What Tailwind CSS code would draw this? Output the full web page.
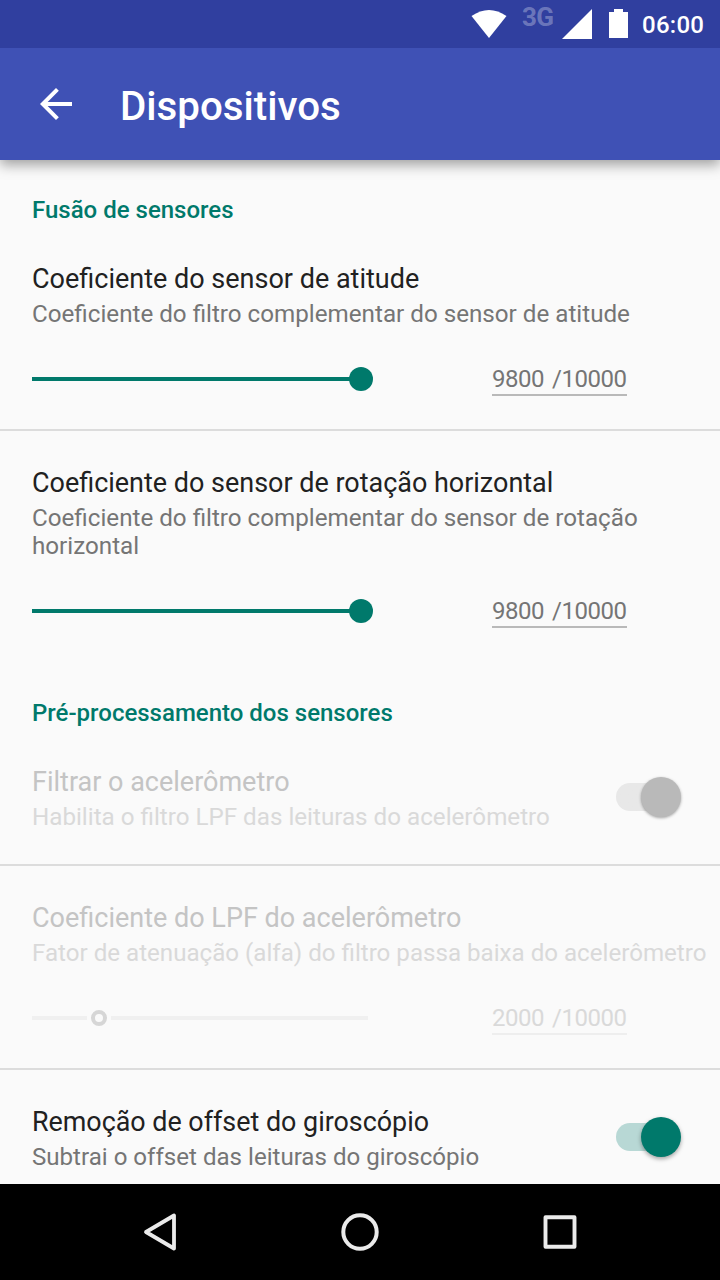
<!DOCTYPE html>
<html lang="pt"><head><meta charset="utf-8"><title>Dispositivos</title>
<script src="https://cdn.jsdelivr.net/npm/@tailwindcss/browser@4"></script></head>
<body class="w-[720px] h-[1280px] overflow-hidden bg-[#fafafa] font-['Roboto',sans-serif] flex flex-col">
<div class="h-12 shrink-0 bg-[#303f9f] relative z-20">
<svg class="w-[720px] h-12" viewBox="0 0 720 48" fill="#fff"><path d="M471.500 16Q489 4 506.500 16L489 38Z"/><text x="522" y="26" font-size="26" font-weight="700" fill-opacity=".3" textLength="32">3G</text><path d="M562 39L592 9V39Z"/><path d="M614 9h9v3h5v26h-19V12h5Z"/><text x="642" y="33" font-size="24" font-weight="500" textLength="62">06:00</text></svg>
</div>
<header class="h-28 shrink-0 bg-[#3f51b5] flex items-center pl-8 relative z-10 shadow-[0_5px_12px_rgba(0,0,0,0.36)]">
<svg class="w-12 h-12" viewBox="0 0 24 24" fill="#fff"><path d="M20 11H7.830l5.590-5.590L12 4l-8 8 8 8 1.410-1.410L7.830 13H20v-2z"/></svg>
<h1 class="ml-10 text-[40.300px] font-medium text-white leading-none pt-1.5">Dispositivos</h1></header>
<main class="h-[1024px] shrink-0 overflow-hidden text-[24.200px] leading-7 text-[#757575]">
<h2 class="pl-8 pt-9 h-[67px] text-[24px] font-medium text-[#00796b]">Fusão de sensores</h2>
<section class="pl-8 pt-[34px] pb-[30px] border-b-2 border-[#dcdcdc]">
<h3 class="text-[27px] leading-9 text-[#212121]">Coeficiente do sensor de atitude</h3>
<p class="mt-[3px]">Coeficiente do filtro complementar do sensor de atitude</p>
<div class="mt-[31px] h-10 flex items-start">
<svg class="w-[345px] h-10" viewBox="0 0 345 40" fill="#00796b"><path d="M0 18h329v4H0z"/><circle cx="329" cy="20" r="12"/></svg>
<div class="ml-[115px] mt-1.5 w-[135px] h-[31px] border-b-2 border-[#b9b9b9] whitespace-nowrap flex gap-2 text-[24px] tracking-[-0.480px]"><span>9800</span><span>/10000</span></div></div>
</section>
<section class="pl-8 pt-[34px] pb-8">
<h3 class="text-[26.960px] leading-9 text-[#212121]">Coeficiente do sensor de rotação horizontal</h3>
<p class="mt-[3px] pr-12">Coeficiente do filtro complementar do sensor de rotação horizontal</p>
<div class="mt-[31px] h-10 flex items-start">
<svg class="w-[345px] h-10" viewBox="0 0 345 40" fill="#00796b"><path d="M0 18h329v4H0z"/><circle cx="329" cy="20" r="12"/></svg>
<div class="ml-[115px] mt-1.5 w-[135px] h-[31px] border-b-2 border-[#b9b9b9] whitespace-nowrap flex gap-2 text-[24px] tracking-[-0.480px]"><span>9800</span><span>/10000</span></div></div>
</section>
<h2 class="pl-8 pt-9 h-[67px] text-[24px] font-medium text-[#00796b]">Pré-processamento dos sensores</h2>
<section class="h-[136px] pl-8 pr-[39px] flex items-center justify-between border-b-2 border-[#dcdcdc]">
<div><h3 class="text-[27px] leading-9 text-[#c4c4c4]">Filtrar o acelerômetro</h3>
<p class="mt-[3px] text-[#d9d9d9]">Habilita o filtro LPF das leituras do acelerômetro</p></div>
<div class="w-[65px] h-7 rounded-full bg-linear-to-r from-[#e8e8e8] from-80% to-transparent to-80% flex items-center justify-end"><span class="size-10 shrink-0 rounded-full bg-[#b9b9b9] shadow-[0_1px_3px_rgba(0,0,0,0.35)]"></span></div>
</section>
<section class="pl-8 pt-[34px] pb-[30px] border-b-2 border-[#dcdcdc] text-[#d9d9d9]">
<h3 class="text-[27px] leading-9 text-[#c4c4c4]">Coeficiente do LPF do acelerômetro</h3>
<p class="mt-[3px] whitespace-nowrap text-[24.140px] leading-7">Fator de atenuação (alfa) do filtro passa baixa do acelerômetro</p>
<div class="mt-[31px] h-10 flex items-start">
<svg class="w-[345px] h-10" viewBox="0 0 345 40"><path fill="#f0f0f0" d="M0 18h55v4H0zM79 18h257v4H79z"/><circle cx="67" cy="20" r="6" fill="none" stroke="#d6d6d6" stroke-width="4"/></svg>
<div class="ml-[115px] mt-1.5 w-[135px] h-[31px] border-b-2 border-[#eeeeee] whitespace-nowrap flex gap-2 text-[24px] tracking-[-0.480px]"><span>2000</span><span>/10000</span></div></div>
</section>
<section class="h-[136px] pl-8 pr-[39px] flex items-center justify-between border-b-2 border-[#dcdcdc]">
<div><h3 class="text-[26.870px] leading-9 text-[#212121]">Remoção de offset do giroscópio</h3>
<p class="mt-[3px] text-[24.100px] leading-7">Subtrai o offset das leituras do giroscópio</p></div>
<div class="w-[65px] h-7 rounded-full bg-linear-to-r from-[#b8d8d5] from-80% to-transparent to-80% flex items-center justify-end"><span class="size-10 shrink-0 rounded-full bg-[#00796b] shadow-[0_2px_4px_rgba(0,0,0,0.35)]"></span></div>
</section>
</main>
<nav class="h-24 shrink-0 bg-black flex items-center justify-center gap-[140px]">
<svg class="w-[60px] h-[60px]" viewBox="0 0 60 60" fill="none" stroke="#ebebeb" stroke-width="3.800" stroke-linejoin="round"><path d="M16 30L44 13.500V46.500Z"/></svg>
<svg class="w-[60px] h-[60px]" viewBox="0 0 60 60" fill="none" stroke="#ebebeb" stroke-width="4"><circle cx="30" cy="30" r="16.700"/></svg>
<svg class="w-[60px] h-[60px]" viewBox="0 0 60 60" fill="none" stroke="#ebebeb" stroke-width="3.900" stroke-linejoin="round"><path d="M15.500 15.300h29v29.400h-29z"/></svg>
</nav>
</body></html>
